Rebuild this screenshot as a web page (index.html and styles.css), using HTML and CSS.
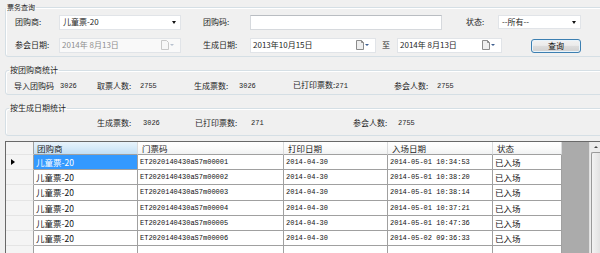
FILE: index.html
```html
<!DOCTYPE html>
<html lang="zh-CN">
<head>
<meta charset="utf-8">
<title>票务查询</title>
<link rel="stylesheet" href="styles.css">
</head>
<body>
<div class="app">
  <fieldset class="grp grp-query">
    <legend class="lg-small">票务查询</legend>
    <div class="query">
      <div class="qrow">
        <span class="lbl lbl-a">团购商:</span>
        <div class="combo combo-a"><span class="ctext">儿童票-20</span><span class="arrow"></span></div>
        <span class="lbl lbl-b">团购码:</span>
        <div class="textbox"></div>
        <span class="lbl lbl-c">状态:</span>
        <div class="combo combo-b"><span class="ctext">--所有--</span><span class="arrow"></span></div>
      </div>
      <div class="qrow">
        <span class="lbl lbl-a">参会日期:</span>
        <div class="date date-a disabled"><span class="dtext">2014年 8月13日</span>
          <svg class="cal" width="14" height="10" viewBox="0 0 14 10"><path d="M0.5 0.5H5.5L7.5 2.5V9.5H0.5Z" fill="#f7f7f7" stroke="#c8c8c8"/><path d="M9 4H13L11 6Z" fill="#b8c2cf"/></svg>
        </div>
        <span class="lbl lbl-b">生成日期:</span>
        <div class="date date-b"><span class="dtext">2013年10月15日</span>
          <svg class="cal" width="14" height="10" viewBox="0 0 14 10"><path d="M0.5 0.5H5.5L7.5 2.5V9.5H0.5Z" fill="#eeeeee" stroke="#8c8c8c"/><path d="M5.5 0.5V2.5H7.5" fill="none" stroke="#8c8c8c"/><path d="M9 4H13L11 6Z" fill="#3f5f8f"/></svg>
        </div>
        <span class="lbl lbl-to">至</span>
        <div class="date date-c"><span class="dtext">2014年 8月13日</span>
          <svg class="cal" width="14" height="10" viewBox="0 0 14 10"><path d="M0.5 0.5H5.5L7.5 2.5V9.5H0.5Z" fill="#eeeeee" stroke="#8c8c8c"/><path d="M5.5 0.5V2.5H7.5" fill="none" stroke="#8c8c8c"/><path d="M9 4H13L11 6Z" fill="#3f5f8f"/></svg>
        </div>
        <button class="btn" type="button">查询</button>
      </div>
    </div>
  </fieldset>

  <fieldset class="grp grp-stat1">
    <legend>按团购商统计</legend>
    <div class="stats stats-1">
      <span>导入团购码</span><span class="num">3026</span>
      <span>取票人数:</span><span class="num">2755</span>
      <span>生成票数:</span><span class="num">3026</span>
      <span>已打印票数:<span class="num">271</span></span>
      <span>参会人数:</span><span class="num">2755</span>
    </div>
  </fieldset>

  <fieldset class="grp grp-stat2">
    <legend>按生成日期统计</legend>
    <div class="stats stats-2">
      <span>生成票数:</span><span class="num">3026</span>
      <span>已打印票数:</span><span class="num">271</span>
      <span>参会人数:</span><span class="num">2755</span>
    </div>
  </fieldset>

  <div class="grid">
    <div class="gtable">
      <div class="grow ghead">
        <div class="gc rh"></div>
        <div class="gc hsel">团购商</div>
        <div class="gc">门票码</div>
        <div class="gc">打印日期</div>
        <div class="gc">入场日期</div>
        <div class="gc">状态</div>
      </div>
      <div class="grow">
        <div class="gc rh"><span class="cur"></span></div>
        <div class="gc cn sel">儿童票-20</div>
        <div class="gc mono">ET2020140430aS7m00001</div>
        <div class="gc mono">2014-04-30</div>
        <div class="gc mono">2014-05-01 10:34:53</div>
        <div class="gc cn">已入场</div>
      </div>
      <div class="grow">
        <div class="gc rh"></div>
        <div class="gc cn">儿童票-20</div>
        <div class="gc mono">ET2020140430aS7m00002</div>
        <div class="gc mono">2014-04-30</div>
        <div class="gc mono">2014-05-01 10:38:20</div>
        <div class="gc cn">已入场</div>
      </div>
      <div class="grow">
        <div class="gc rh"></div>
        <div class="gc cn">儿童票-20</div>
        <div class="gc mono">ET2020140430aS7m00003</div>
        <div class="gc mono">2014-04-30</div>
        <div class="gc mono">2014-05-01 10:38:14</div>
        <div class="gc cn">已入场</div>
      </div>
      <div class="grow">
        <div class="gc rh"></div>
        <div class="gc cn">儿童票-20</div>
        <div class="gc mono">ET2020140430aS7m00004</div>
        <div class="gc mono">2014-04-30</div>
        <div class="gc mono">2014-05-01 10:37:21</div>
        <div class="gc cn">已入场</div>
      </div>
      <div class="grow">
        <div class="gc rh"></div>
        <div class="gc cn">儿童票-20</div>
        <div class="gc mono">ET2020140430aS7m00005</div>
        <div class="gc mono">2014-04-30</div>
        <div class="gc mono">2014-05-01 10:47:36</div>
        <div class="gc cn">已入场</div>
      </div>
      <div class="grow">
        <div class="gc rh"></div>
        <div class="gc cn">儿童票-20</div>
        <div class="gc mono">ET2020140430aS7m00006</div>
        <div class="gc mono">2014-04-30</div>
        <div class="gc mono">2014-05-02 09:36:33</div>
        <div class="gc cn">已入场</div>
      </div>
      <div class="grow">
        <div class="gc rh"></div>
        <div class="gc"></div>
        <div class="gc"></div>
        <div class="gc"></div>
        <div class="gc"></div>
        <div class="gc"></div>
      </div>
    </div>
    <div class="gfill"></div>
    <div class="vscroll">
      <div class="sb-up"><span class="sb-arrow"></span></div>
      <div class="sb-thumb"></div>
    </div>
  </div>
</div>
</body>
</html>
```

FILE: styles.css
```css
* { box-sizing: border-box; }
html, body { margin: 0; padding: 0; }
body {
  width: 600px;
  height: 253px;
  overflow: hidden;
  background: #f0f0f0;
  font-family: "Noto Sans CJK SC", sans-serif;
  font-size: 8px;
  line-height: 10px;
  color: #1e1e1e;
}
.app { padding-left: 5px; width: 600px; }

/* group boxes */
.grp {
  margin: 0 -12px 0 0;
  padding: 0;
  min-width: 0;
  border: 1px solid #d5dfe5;
  border-radius: 3px;
  box-shadow: inset 1px 1px 0 #ffffff;
}
.grp legend {
  margin-left: 3px;
  padding: 0 1px;
  font-size: 8px;
  line-height: 10px;
  color: #1e1e1e;
}
.grp legend.lg-small { margin-left: 0; font-size: 7px; }
.grp-query { margin-top: 2px; }
.grp-stat1 { margin-top: 8px; }
.grp-stat2 { margin-top: 8px; }

/* query rows */
.query { padding: 2px 0 3px 9px; display: flex; flex-direction: column; gap: 7px; }
.qrow { display: flex; align-items: center; height: 16px; }
.lbl { flex: none; white-space: nowrap; }
.lbl-a { width: 44px; }
.lbl-b { width: 47px; margin-left: 22px; }
.lbl-c { width: 32px; margin-left: 24px; }
.lbl-to { width: 15px; margin-left: 6px; }

.combo {
  flex: none;
  display: flex;
  align-items: center;
  justify-content: space-between;
  height: 15px;
  background: #ffffff;
  border: 1px solid #e1e4e8;
  padding: 0 4px 0 3px;
}
.combo-a { width: 122px; }
.combo-b { width: 83px; height: 14px; }
.ctext { font-size: 8px; white-space: nowrap; }
.arrow {
  width: 0; height: 0;
  border-left: 2.5px solid transparent;
  border-right: 2.5px solid transparent;
  border-top: 3px solid #111111;
}
.textbox {
  flex: none;
  width: 192px;
  height: 15px;
  background: #ffffff;
  border: 1px solid #d6d9dd;
  border-top-color: #b9bdc2;
}

.date {
  flex: none;
  display: flex;
  align-items: center;
  justify-content: space-between;
  height: 15px;
  background: #ffffff;
  border: 1px solid #e1e4e8;
  padding: 0 5px 0 2px;
}
.date-a { width: 122px; }
.date-b { width: 126px; }
.date-c { width: 105px; }
.dtext { white-space: nowrap; font-size: 8px; }
.date.disabled { background: #f9f9f9; }
.date.disabled .dtext { color: #8e8e8e; }
.cal { flex: none; display: block; }

.btn {
  flex: none;
  margin: 2px 0 0 29px;
  width: 50px;
  height: 14px;
  padding: 0;
  border: 1px solid #3c7fb1;
  border-radius: 3px;
  background: linear-gradient(#f2f2f2 0%, #ebebeb 45%, #dddddd 50%, #cfcfcf 100%);
  box-shadow: inset 0 0 0 1px #e8f4fc;
  font-family: "Noto Sans CJK SC", sans-serif;
  font-size: 8px;
  line-height: 10px;
  color: #111111;
}

/* statistics rows */
.stats { display: grid; align-items: center; height: 10px; white-space: nowrap; }
.stats-1 {
  padding: 5px 0 4px 8px;
  height: 19px;
  grid-template-columns: 46px 37px 43px 54px 45px 54px 101px 43px auto;
}
.stats-2 {
  padding: 5px 0 7px 91px;
  height: 22px;
  grid-template-columns: 46px 52px 56px 102px 45px auto;
}
.num { font-family: "Liberation Mono", monospace; font-size: 7px; }

/* data grid */
.grid {
  margin-top: 5px;
  display: flex;
  height: 120px;
  border-top: 1px solid #696969;
  border-left: 1px solid #696969;
}
.gtable { flex: none; display: flex; flex-direction: column; }
.grow {
  display: grid;
  grid-template-columns: 28px 104px 146px 104px 105px 69px;
  height: 16px;
}
.gc {
  border-right: 1px solid #a0a0a0;
  border-bottom: 1px solid #a0a0a0;
  background: #ffffff;
  padding: 0 2px;
  display: flex;
  align-items: center;
  white-space: nowrap;
  overflow: hidden;
  color: #111111;
}
.gc.cn { font-size: 8.5px; }
.gc.mono { font-family: "Liberation Mono", monospace; font-size: 7px; }
.gc.sel { background: #3399ff; color: #ffffff; }

.ghead { height: 14px; }
.ghead .gc {
  background: linear-gradient(#ffffff 0%, #fbfbfb 50%, #f1f2f3 100%);
  border-right-color: #dadbdc;
  border-bottom-color: #a0a0a0;
  padding: 0 4px;
  font-size: 8.5px;
  color: #1e1e1e;
}
.ghead .gc.hsel {
  background: linear-gradient(#e8f3fc 0%, #d6eaf9 50%, #c2def4 100%);
  padding-left: 3px;
}
.gc.rh {
  background: #f4f4f4;
  border-right-color: #a0a0a0;
  border-bottom-color: #e4e4e4;
  padding: 0 0 0 5px;
}
.cur {
  width: 0; height: 0;
  border-top: 3px solid transparent;
  border-bottom: 3px solid transparent;
  border-left: 4px solid #000000;
}

.gfill { flex: 1; background: #ababab; }
.vscroll {
  flex: none;
  width: 11px;
  background: #ececec;
  border-left: 1px solid #e0e0e0;
  display: flex;
  flex-direction: column;
}
.sb-up { height: 10px; display: flex; align-items: center; justify-content: center; padding-left: 2px; }
.sb-arrow {
  width: 0; height: 0;
  border-left: 2px solid transparent;
  border-right: 2px solid transparent;
  border-bottom: 2px solid #444444;
}
.sb-thumb {
  flex: 1;
  margin-left: 1px;
  border: 1px solid #9a9a9a;
  border-right: none;
  border-radius: 2px 0 0 0;
  background: linear-gradient(90deg, #f3f3f3, #e2e2e2);
}
```
